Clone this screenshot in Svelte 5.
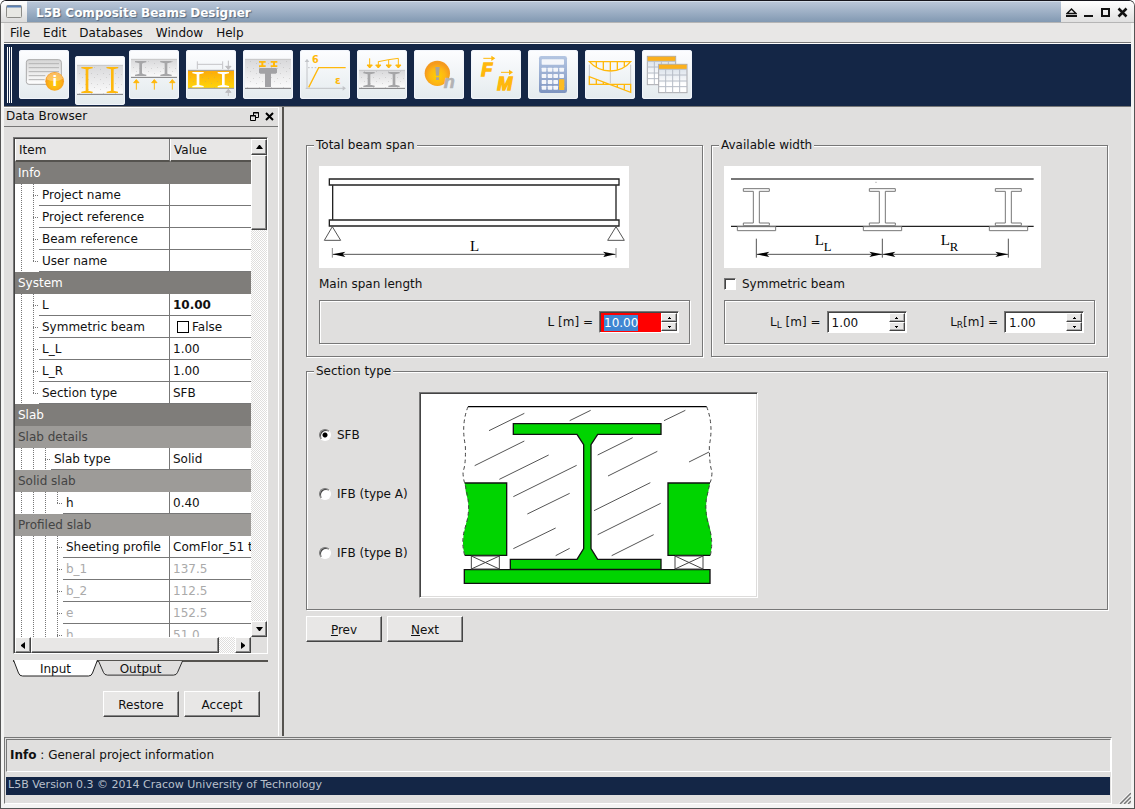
<script>
  import { onMount } from "svelte";

  let spanInput;
  let span = $state("10.00");
  let left = $state("1.00");
  let right = $state("1.00");
  let symmetric = $state(false);
  let section = $state("SFB");
  let tab = $state("Input");

  const menus = ["File", "Edit", "Databases", "Window", "Help"];
  const sections = ["SFB", "IFB (type A)", "IFB (type B)"];
  const tools = [
    "info",
    "span",
    "supports",
    "slab",
    "concrete",
    "material",
    "loads",
    "factors",
    "forces",
    "calculate",
    "diagrams",
    "tables",
  ];

  const rows = [
    { group: 1, name: "Info" },
    { name: "Project name", value: "", depth: 2 },
    { name: "Project reference", value: "", depth: 2 },
    { name: "Beam reference", value: "", depth: 2 },
    { name: "User name", value: "", depth: 2, last: true },
    { group: 1, name: "System" },
    { name: "L", value: "10.00", depth: 2, bold: true },
    { name: "Symmetric beam", value: "False", depth: 2, check: true },
    { name: "L_L", value: "1.00", depth: 2 },
    { name: "L_R", value: "1.00", depth: 2 },
    { name: "Section type", value: "SFB", depth: 2, last: true },
    { group: 1, name: "Slab" },
    { group: 2, name: "Slab details" },
    { name: "Slab type", value: "Solid", depth: 3 },
    { group: 2, name: "Solid slab" },
    { name: "h", value: "0.40", depth: 4, last: true },
    { group: 2, name: "Profiled slab" },
    { name: "Sheeting profile", value: "ComFlor_51 t", depth: 4 },
    { name: "b_1", value: "137.5", depth: 4, off: true },
    { name: "b_2", value: "112.5", depth: 4, off: true },
    { name: "e", value: "152.5", depth: 4, off: true },
    { name: "h", value: "51.0", depth: 4, off: true },
  ];

  // hatching of the concrete in the section drawing
  const hatch = [
    [583, 212, 689, 160],
    [825, 182, 888, 151],
    [1108, 182, 1172, 151],
    [540, 317, 689, 243],
    [614, 358, 762, 285],
    [656, 410, 846, 316],
    [698, 462, 825, 400],
    [656, 566, 783, 504],
    [783, 587, 825, 565],
    [909, 285, 1014, 233],
    [940, 348, 1088, 274],
    [898, 452, 1067, 368],
    [909, 524, 1098, 430],
    [951, 587, 1077, 524],
    [1183, 306, 1243, 276],
  ];

  function step(value, by) {
    return (parseFloat(value) + by).toFixed(2);
  }

  onMount(() => {
    spanInput.focus();
    spanInput.select();
  });
</script>

{#snippet ibeam(x, y, h, color)}
  <path
    fill={color}
    d="M{x} {y}h34v4l-13 3v{h - 14}l13 3v4h-34v-4l13 -3v-{h - 14}l-13 -3z"
  />
{/snippet}

{#snippet slab(y, h)}
  <rect x="6" {y} width="138" height={h} fill="url(#slabGrey)" />
  <rect x="6" {y} width="138" height={h} fill="url(#dots)" />
  <path d="M6 {y}h138" stroke="#c4c4c6" stroke-width="3" />
  <path d="M6 {y + h}h138" stroke="#77777a" stroke-width="3" />
{/snippet}

{#snippet arrow(x, y, len, dir, color)}
  <path
    d="M{x} {y}v{dir * len}m-8 {dir * -9}l8 {dir * 9}l8 {dir * -9}z"
    stroke={color}
    stroke-width="3"
    fill={color}
  />
{/snippet}

{#snippet toolIcon(name)}
  <svg class="tool-icon" viewBox="0 0 150 147" aria-hidden="true">
    {#if name === "info"}
      <rect x="22" y="29" width="105" height="74" rx="8" fill="url(#paper)" stroke="#aaa" stroke-width="3" />
      <path d="M29 41h91M29 53h91M29 65h91M29 77h50M29 89h48" stroke="#b4b4b4" stroke-width="3" />
      <circle cx="107" cy="94" r="28" fill="url(#amber)" />
      <path d="M82 88a26 26 0 0 1 50 -2q-24 14 -50 2z" fill="#ffd38a" opacity=".6" />
      <text x="107" y="108" class="glyph" font-size="40" fill="#fff" text-anchor="middle">i</text>
    {:else if name === "span"}
      {@render slab(28, 87)}
      {@render ibeam(19, 33, 78, "#ffb80c")}
      {@render ibeam(95, 33, 78, "#ffb80c")}
    {:else if name === "supports"}
      {@render slab(28, 54)}
      {@render ibeam(18, 33, 45, "#a6a6a8")}
      {@render ibeam(94, 33, 45, "#a6a6a8")}
      {@render arrow(22, 119, 30, -1, "#ffb80c")}
      {@render arrow(76, 119, 30, -1, "#ffb80c")}
      {@render arrow(130, 119, 30, -1, "#ffb80c")}
    {:else if name === "slab"}
      <rect x="6" y="61" width="138" height="54" fill="url(#slabAmber)" />
      <rect x="6" y="61" width="138" height="54" fill="url(#dots)" />
      <path d="M6 61h138M6 115h138" stroke="#9c9ca0" stroke-width="3" />
      {@render ibeam(19, 66, 46, "#fff")}
      {@render ibeam(95, 66, 46, "#fff")}
      <path d="M34 34v23M110 34v23M34 43h76" stroke="#c4c4c8" stroke-width="3" />
      {@render arrow(127, 32, 26, 1, "#bdbdc0")}
      {@render arrow(127, 138, 20, -1, "#bdbdc0")}
    {:else if name === "concrete"}
      {@render slab(28, 87)}
      <path d="M48 57q0 -3 4 -3h46q4 0 4 3v11l-4 3h-14v40h-18v-40h-14l-4 -3z" fill="#a2a2a5" />
      <path d="M48 33h20v5h-7v8h7v5h-20v-5h7v-8h-7zM83 33h20v5h-7v8h7v5h-20v-5h7v-8h-7z" fill="#ffb80c" />
    {:else if name === "material"}
      <path d="M21 115v-84M17 115h118" stroke="#c2c4c8" stroke-width="3" />
      <path d="M14 36l7 -10l7 10zM128 108l10 7l-10 7z" fill="#c2c4c8" />
      <path d="M24 53h32" stroke="#c2c4c8" stroke-width="3" stroke-dasharray="5 5" />
      <path d="M26 112l30 -59h81" fill="none" stroke="#ffb80c" stroke-width="4" />
      <text x="36" y="39" class="glyph" font-size="29" fill="#ffb80c">6</text>
      <text x="105" y="101" class="glyph" font-size="31" fill="#ffb80c">ε</text>
    {:else if name === "loads"}
      {@render slab(61, 54)}
      {@render ibeam(19, 66, 45, "#a6a6a8")}
      {@render ibeam(94, 66, 45, "#a6a6a8")}
      {@render arrow(38, 25, 29, 1, "#ffb80c")}
      {@render arrow(64, 34, 20, 1, "#ffb80c")}
      {@render arrow(95, 29, 25, 1, "#ffb80c")}
      {@render arrow(124, 25, 29, 1, "#ffb80c")}
      <path d="M64 35l31 -6l29 -4" fill="none" stroke="#ffb80c" stroke-width="3" />
    {:else if name === "factors"}
      <circle cx="70" cy="70" r="38" fill="url(#amber)" />
      <path d="M64 51h13l-2 26h-9zM66 82h9v8h-9z" fill="#aaa59c" />
      <text x="89" y="115" class="glyph slant" font-size="54" fill="#b2b2b4" stroke="#b2b2b4" stroke-width="2">n</text>
    {:else if name === "forces"}
      <text x="31" y="78" class="glyph slant" font-size="54" fill="#ffb80c" stroke="#ffb80c" stroke-width="4">F</text>
      <text x="79" y="121" class="glyph slant" font-size="54" fill="#ffb80c" stroke="#ffb80c" stroke-width="4">M</text>
      <path d="M37 25h30M90 67h30" stroke="#ffb80c" stroke-width="3" />
      <path d="M61 17l12 8l-12 8zM114 59l12 8l-12 8z" fill="#ffb80c" />
    {:else if name === "calculate"}
      <rect x="33" y="18" width="84" height="111" rx="7" fill="url(#calc)" />
      <rect x="41" y="28" width="67" height="16" rx="2" fill="#f4f6fa" />
      {#each [53, 72, 90, 107] as y}
        {#each [41, 59, 76, 94] as x}
          <rect {x} {y} width="14" height="12" rx="2" fill="#f4f6fa" />
        {/each}
      {/each}
      <rect x="93" y="88" width="16" height="32" rx="2" fill="#fdbb22" />
    {:else if name === "diagrams"}
      <path d="M13 44v62M76 66v34M137 44v60" stroke="#c4c6ca" stroke-width="3" />
      <path d="M13 35h124q-23 28 -61 28t-63 -28zM34 35v16M55 35v25M76 35v28M97 35v25M118 35v16" fill="none" stroke="#ffb80c" stroke-width="4" />
      <path d="M13 103h124v24l-124 -47zM34 88v15M55 96v7M97 103v8M118 103v16" fill="none" stroke="#ffb80c" stroke-width="4" />
    {:else}
      {#each [[16, 19], [50, 43]] as [x, y]}
        <rect {x} {y} width="85" height="85" fill="url(#sheet)" stroke="#a9a9ad" stroke-width="3" />
        <rect x={x + 1} y={y + 1} width="83" height="13" fill="#fbb01c" />
        <path
          d="M{x} {y + 15}h85M{x + 21} {y + 15}v70M{x + 42} {y + 15}v70M{x + 63} {y + 15}v70M{x} {y + 32}h85M{x} {y + 50}h85M{x} {y + 67}h85"
          stroke="#b6bcc6"
          stroke-width="3"
        />
      {/each}
    {/if}
  </svg>
{/snippet}

{#snippet tip(x, y, dir)}
  <path d="M{x} {y}l{dir * 38} -8l{dir * -8} 8l{dir * 8} 8z" />
{/snippet}

{#snippet steps(label, change)}
  <span class="steps">
    <button type="button" aria-label="Increase {label}" onclick={() => change(0.1)}>
      <svg viewBox="0 0 3 2"><path d="M1 0h1v1h1v1h-3v-1h1z" /></svg>
    </button>
    <button type="button" aria-label="Decrease {label}" onclick={() => change(-0.1)}>
      <svg viewBox="0 0 3 2"><path d="M0 0h3v1h-1v1h-1v-1h-1z" /></svg>
    </button>
  </span>
{/snippet}

<svg class="defs" aria-hidden="true">
  <defs>
    <linearGradient id="slabGrey" x2="0" y2="1">
      <stop offset="0" stop-color="#d8d8da" />
      <stop offset="1" stop-color="#fcfcfc" />
    </linearGradient>
    <linearGradient id="slabAmber" x2="0" y2="1">
      <stop offset="0" stop-color="#fda908" />
      <stop offset="1" stop-color="#ffd60a" />
    </linearGradient>
    <linearGradient id="paper" x2="0" y2="1">
      <stop offset="0" stop-color="#d6d6d6" />
      <stop offset="1" stop-color="#fff" />
    </linearGradient>
    <linearGradient id="calc" x2="0" y2="1">
      <stop offset="0" stop-color="#b4c6e2" />
      <stop offset="1" stop-color="#7e94c0" />
    </linearGradient>
    <linearGradient id="sheet" x2="0" y2="1">
      <stop offset="0" stop-color="#d2dbe6" />
      <stop offset=".7" stop-color="#fff" />
    </linearGradient>
    <radialGradient id="amber" cy=".6">
      <stop offset="0" stop-color="#ffd000" />
      <stop offset=".6" stop-color="#fdb714" />
      <stop offset="1" stop-color="#f59a1e" />
    </radialGradient>
    <pattern id="dots" width="36" height="30" patternUnits="userSpaceOnUse">
      <path d="M3 9h3v3h-3zM21 3h3v3h-3zM12 21h3v3h-3zM30 24h3v3h-3z" fill="#999" opacity=".3" />
    </pattern>
  </defs>
</svg>

<div class="window">
  <header class="titlebar">
    <div class="app-icon">
      <svg viewBox="0 0 16 13" width="16" height="13" aria-hidden="true">
        <rect x=".5" y=".5" width="15" height="12" rx="1" fill="#e8e8e4" stroke="#8c8c88" />
        <path d="M1 1.500h14" stroke="#5a80b4" stroke-width="2" />
      </svg>
    </div>
    <h1>L5B Composite Beams Designer</h1>
    <div class="window-buttons">
      <button aria-label="Shade">
        <svg viewBox="0 0 11 11"><path d="M1 6.500h9L5.500 2z" fill="none" stroke="#111" stroke-width="1.500" /><path d="M0 9h11" stroke="#111" stroke-width="2" /></svg>
      </button>
      <button aria-label="Minimize">
        <svg viewBox="0 0 11 11"><path d="M1 9h9" stroke="#111" stroke-width="2" /></svg>
      </button>
      <button aria-label="Maximize">
        <svg viewBox="0 0 11 11"><path d="M2 2h7v7h-7z" fill="none" stroke="#111" stroke-width="2" /></svg>
      </button>
      <button aria-label="Close">
        <svg viewBox="0 0 11 11"><path d="M1.500 1.500l8 8M9.500 1.500l-8 8" stroke="#111" stroke-width="2.500" /></svg>
      </button>
    </div>
  </header>

  <div class="client">
    <nav class="menubar">
      {#each menus as menu}
        <button>{menu}</button>
      {/each}
    </nav>

    <div class="toolbar">
      <span class="handle"></span>
      {#each tools as tool}
        <button class="tool" class:pressed={tool === "span"} aria-label={tool}>
          {@render toolIcon(tool)}
        </button>
      {/each}
    </div>

    <div class="workspace">
      <aside class="dock">
        <div class="dock-title">
          <h2>Data Browser</h2>
          <button aria-label="Float">
            <svg viewBox="0 0 9 9"><path d="M3.500 3v-2.500h5v5h-2.500M3 1h6M.5 3.500h5v5h-5zM0 4h6" fill="none" stroke="#000" /></svg>
          </button>
          <button aria-label="Close panel">
            <svg viewBox="0 0 9 9"><path d="M1 1l7 7M8 1l-7 7" fill="none" stroke="#000" stroke-width="2" /></svg>
          </button>
        </div>

        <div class="tree">
          <div class="viewport">
            <table>
              <thead>
                <tr><th class="item">Item</th><th>Value</th></tr>
              </thead>
              <tbody>
                {#each rows as row}
                  {#if row.group}
                    <tr class="group level{row.group}"><td colspan="2">{row.name}</td></tr>
                  {:else}
                    <tr class:off={row.off}>
                      <td class="item">
                        <div class="cell">
                          <svg class="guides" width={row.depth * 12} height="22" aria-hidden="true">
                            {#each Array(row.depth) as _, i}
                              {@const own = i === row.depth - 1}
                              <path d="M{i * 12 + 6.5} 0v{own && row.last ? 12 : 22}" />
                              {#if own}<path d="M{i * 12 + 6} 11.500h5" />{/if}
                            {/each}
                          </svg>
                          <span class="name">{row.name}</span>
                        </div>
                      </td>
                      <td class="value" class:bold={row.bold}>
                        {#if row.check}
                          <label><input type="checkbox" class="flat" />{row.value}</label>
                        {:else}
                          {row.value}
                        {/if}
                      </td>
                    </tr>
                  {/if}
                {/each}
              </tbody>
            </table>
          </div>
          <div class="scroll vertical">
            <button aria-label="Scroll up"><svg viewBox="0 0 7 4"><path d="M3 0h1l3 4h-7z" /></svg></button>
            <span class="track"><span class="thumb"></span></span>
            <button aria-label="Scroll down"><svg viewBox="0 0 7 4"><path d="M3 4h1l3 -4h-7z" /></svg></button>
          </div>
          <div class="scroll horizontal">
            <button aria-label="Scroll left"><svg class="side" viewBox="0 0 4 7"><path d="M0 3v1l4 3v-7z" /></svg></button>
            <span class="track"><span class="thumb"></span></span>
            <button aria-label="Scroll right"><svg class="side" viewBox="0 0 4 7"><path d="M4 3v1l-4 3v-7z" /></svg></button>
          </div>
        </div>

        <div class="tabs">
          {#each ["Input", "Output"] as name}
            <button class:active={tab === name} onclick={() => (tab = name)}>
              <svg viewBox="0 0 85 17" preserveAspectRatio="none" aria-hidden="true"><path d="M.5 0l5 13q1 3 4 3h66q3 0 4 -3l5 -13" /></svg>
              <span>{name}</span>
            </button>
          {/each}
        </div>

        <div class="dock-actions">
          <button class="push">Restore</button>
          <button class="push">Accept</button>
        </div>
      </aside>

      <main>
        <div class="columns">
          <fieldset>
            <legend>Total beam span</legend>
            <svg class="sketch" width="310" height="102" viewBox="72 108 930 306" role="img" aria-label="Beam span L">
              <rect x="72" y="108" width="930" height="306" fill="#fff" />
              <g fill="none" stroke="#222" stroke-width="3">
                <path d="M103 147h869v18h-869zM103 270h869v18h-869z" stroke-width="4" />
                <path d="M113 166v103M963 166v103" stroke-width="4" />
                <path d="M112 290l-24 41h49zM963 290l-25 41h50z" stroke="#555" />
                <path d="M112 373h850" stroke="#555" />
                <path d="M112 354v29M963 354v29" stroke="#888" />
              </g>
              {@render tip(113, 373, 1)}
              {@render tip(962, 373, -1)}
              <text x="525" y="363" class="serif" font-size="45">L</text>
            </svg>
            <p>Main span length</p>
            <div class="inputs">
              <div class="field">
                <label for="span">L [m] =</label>
                <span class="spin">
                  <input id="span" class="invalid" type="text" bind:this={spanInput} bind:value={span} />
                  {@render steps("L", (by) => (span = step(span, by)))}
                </span>
              </div>
            </div>
          </fieldset>

          <fieldset>
            <legend>Available width</legend>
            <svg class="sketch" width="317" height="102" viewBox="72 108 951 306" role="img" aria-label="Widths to the left and right">
              <rect x="72" y="108" width="951" height="306" fill="#fff" />
              <path d="M93 147h908" stroke="#777" stroke-width="6" />
              <path d="M93 289h908" stroke="#222" stroke-width="4" />
              <path d="M525 157h6" stroke="#aaa" stroke-width="2" />
              {#each [169, 547, 925] as x}
                <path
                  d="M{x - 39} 176h78v8h-30v95h30v8h-78v-8h30v-95h-30z"
                  fill="#fff"
                  stroke="#777"
                  stroke-width="3"
                />
                <path d="M{x - 57} 290h115v12h-115z" fill="#fff" stroke="#777" stroke-width="3" />
                <path d="M{x} 326v57" stroke="#555" stroke-width="3" />
              {/each}
              <path d="M169 373h756" stroke="#555" stroke-width="3" />
              {@render tip(170, 373, 1)}
              {@render tip(546, 373, -1)}
              {@render tip(548, 373, 1)}
              {@render tip(924, 373, -1)}
              <text x="344" y="345" class="serif" font-size="45">L<tspan font-size="38" dy="18">L</tspan></text>
              <text x="722" y="345" class="serif" font-size="45">L<tspan font-size="38" dy="18">R</tspan></text>
            </svg>
            <p>
              <label class="option"><input type="checkbox" class="sunken" bind:checked={symmetric} />Symmetric beam</label>
            </p>
            <div class="inputs">
              <div class="field">
                <label for="left">L<sub>L</sub> [m] =</label>
                <span class="spin">
                  <input id="left" type="text" bind:value={left} />
                  {@render steps("L left", (by) => (left = step(left, by)))}
                </span>
              </div>
              <div class="field">
                <label for="right">L<sub>R</sub>[m] =</label>
                <span class="spin">
                  <input id="right" type="text" bind:value={right} />
                  {@render steps("L right", (by) => (right = step(right, by)))}
                </span>
              </div>
            </div>
          </fieldset>
        </div>

        <fieldset class="section">
          <legend>Section type</legend>
          <div class="section-body">
            <div class="radios">
              {#each sections as name}
                <label class="option"><input type="radio" name="section" value={name} bind:group={section} />{name}</label>
              {/each}
            </div>
            <div class="preview">
              <svg width="335" height="202" viewBox="379 102 1005 606" role="img" aria-label="SFB cross section">
                <path d="M520 140h716" stroke="#000" stroke-width="4" />
                <g stroke="#555" stroke-width="3">
                  {#each hatch as [x1, y1, x2, y2]}
                    <line {x1} {y1} {x2} {y2} />
                  {/each}
                </g>
                <g fill="#00d400">
                  <path d="M510 369h126v217h-126q-12 -42 4 -94q16 -50 0 -92z" />
                  <path d="M1246 369h-126v217h127q10 -46 -4 -94q-16 -50 -3 -92z" />
                </g>
                <g fill="none" stroke="#111" stroke-width="4">
                  <path d="M510 369h126v217h-126M1246 369h-126v217h127" />
                  <path
                    d="M520 140q-21 54 -8 116q2 60 -7 78q0 20 5 35q6 24 10 50q6 38 -8 82q-14 42 -2 85"
                    stroke="#444"
                    stroke-width="3"
                    stroke-dasharray="11 9"
                  />
                  <path
                    d="M1236 140q21 54 8 116q0 60 8 78q0 20 -6 35q-6 24 -11 50q-5 38 8 82q14 42 4 85"
                    stroke="#444"
                    stroke-width="3"
                    stroke-dasharray="11 9"
                  />
                </g>
                <path
                  d="M656 191h443v32h-190l-20 31v312l20 32h190v30h-452v-30h200l20 -32v-312l-20 -31h-191z"
                  fill="#00d400"
                  stroke="#111"
                  stroke-width="4"
                />
                <path d="M509 629h737v41h-737z" fill="#00d400" stroke="#111" stroke-width="4" />
                <g fill="none" stroke="#444" stroke-width="3">
                  <path d="M530 588h84v39h-84zl84 39M614 588l-84 39" />
                  <path d="M1141 588h84v39h-84zl84 39M1225 588l-84 39" />
                </g>
              </svg>
            </div>
          </div>
        </fieldset>

        <div class="pager">
          <button class="push"><u>P</u>rev</button>
          <button class="push"><u>N</u>ext</button>
        </div>
      </main>
    </div>

    <footer>
      <div class="bottom">
        <div class="message"><b>Info</b>&nbsp;: General project information</div>
        <div class="version">L5B Version 0.3 © 2014 Cracow University of Technology</div>
      </div>
      <svg class="grip" width="14" height="14" viewBox="0 0 14 14" aria-hidden="true">
        <path d="M2 14l12 -12M6 14l8 -8M10 14l4 -4" stroke="#fff" stroke-width="1.500" />
        <path d="M3 14l11 -11M7 14l7 -7M11 14l3 -3" stroke="#777" stroke-width="1.500" />
      </svg>
    </footer>
  </div>
</div>

<style>
  :global(body) {
    background: #fff;
  }

  .window,
  .window * {
    box-sizing: border-box;
  }

  .window {
    display: flex;
    flex-direction: column;
    height: 100vh;
    overflow: hidden;
    border: 1px solid #555;
    border-top-color: #15151c;
    border-radius: 6px 6px 0 0;
    background: #f4f4f3;
    color: #111;
    font: 12px/16px "DejaVu Sans", sans-serif;
  }

  button,
  input {
    font: inherit;
    color: inherit;
  }

  button {
    padding: 0;
    border: 0;
    background: none;
  }

  h1,
  h2,
  p {
    margin: 0;
    font-size: 12px;
  }

  .defs {
    position: absolute;
    width: 0;
    height: 0;
  }

  /* title bar */

  .titlebar {
    display: flex;
    flex: none;
    height: 22px;
    border-bottom: 1px solid #b5b5b5;
  }

  .app-icon {
    display: flex;
    align-items: center;
    justify-content: center;
    width: 26px;
    background: linear-gradient(#fff, #dcdcdc);
  }

  .titlebar h1 {
    flex: 1;
    padding-left: 9px;
    background: linear-gradient(#b9c6d8, #8299b2);
    border-top: 1px solid #d3dde9;
    color: #fff;
    line-height: 22px;
    text-shadow: 1px 1px 1px #55677c;
  }

  .window-buttons {
    display: flex;
    align-items: center;
    gap: 6px;
    padding: 2px 6px 0 5px;
    background: linear-gradient(#fff, #e0e0e0);
  }

  .window-buttons button,
  .window-buttons svg {
    display: block;
    width: 11px;
    height: 11px;
  }

  /* menu and tool bars */

  .client {
    display: flex;
    flex: 1;
    flex-direction: column;
    min-height: 0;
    margin: 0 3px 4px;
    background: #e0dfde;
  }

  .menubar {
    display: flex;
    flex: none;
    gap: 13px;
    height: 21px;
    padding: 0 6px;
    border-bottom: 1px solid #fff;
    box-shadow: inset 0 -1px #777;
    background: #e8e7e6;
  }

  .menubar button {
    line-height: 20px;
  }

  .toolbar {
    display: flex;
    flex: none;
    gap: 7px;
    height: 63px;
    padding: 6px 3px;
    border-bottom: 1px solid #777;
    background: #142646;
  }

  .handle {
    width: 5px;
    height: 56px;
    margin-top: -3px;
    border: solid #fff;
    border-width: 0 1px;
    background: linear-gradient(90deg, #142646 1px, #fff 1px 2px, #142646 2px);
  }

  .tool {
    width: 50px;
    height: 49px;
    border-radius: 3px;
    background: linear-gradient(#fdfdff, #e4ebee);
    box-shadow: inset 0 0 0 1px #f2f5fb;
  }

  .tool.pressed {
    margin: 6px -3px 0 -1px;
  }

  .tool-icon {
    display: block;
    width: 50px;
    height: 49px;
  }

  .glyph {
    font-family: "DejaVu Sans", sans-serif;
    font-weight: bold;
  }

  .slant {
    font-style: italic;
    font-family: "Liberation Sans", sans-serif;
  }

  .serif {
    font-family: "Liberation Serif", serif;
  }

  /* data browser */

  .workspace {
    display: flex;
    flex: 1;
    min-height: 0;
  }

  .dock {
    display: flex;
    flex: none;
    flex-direction: column;
    width: 280px;
    padding-bottom: 19px;
    border-right: 2px solid #55534f;
    box-shadow: inset -3px 0 #e0dfde, inset -4px 0 #fff;
  }

  .dock-title {
    display: flex;
    align-items: center;
    gap: 6px;
    height: 20px;
    margin-right: 4px;
    padding: 0 4px 2px 2px;
    border-bottom: 1px solid #777;
    border-top: 1px solid #fff;
  }

  .dock-title h2 {
    flex: 1;
    font-weight: normal;
  }

  .dock-title button,
  .dock-title svg {
    display: block;
    width: 9px;
    height: 9px;
  }

  .tree {
    display: grid;
    flex: 1;
    grid-template: minmax(0, 1fr) 16px / minmax(0, 1fr) 16px;
    min-height: 0;
    margin: 10px 14px 0 9px;
    border: 1px solid #777;
    border-right-color: #fff;
    border-bottom-color: #fff;
    box-shadow: inset 1px 1px #444;
    padding: 1px 0 0 1px;
  }

  .viewport {
    overflow: hidden;
    background: #fff;
  }

  table {
    width: 300px;
    border-collapse: separate;
    border-spacing: 0;
    table-layout: fixed;
  }

  th,
  td {
    height: 22px;
    padding: 0 3px;
    line-height: 20px;
    text-align: left;
    white-space: nowrap;
    font-weight: normal;
  }

  th {
    height: 23px;
    border-bottom: 2px solid #55534f;
    border-left: 1px solid #fff;
    background: #e8e7e6;
  }

  .item {
    width: 155px;
    border-right: 1px solid #777;
  }

  .group td {
    color: #fff;
    background: #7f7d7a;
  }

  .group.level2 td {
    color: #444;
    background: #9d9b98;
  }

  td.item {
    padding: 0;
  }

  .cell {
    display: flex;
  }

  .guides {
    flex: none;
    fill: none;
    stroke: #777;
    stroke-dasharray: 1 1;
  }

  .name {
    flex: 1;
    height: 22px;
    padding-left: 3px;
    line-height: 22px;
  }

  .name,
  .value {
    border-bottom: 1px solid #777;
  }

  .value label {
    display: flex;
    align-items: center;
    gap: 3px;
    padding-left: 4px;
  }

  .off {
    color: #aaa;
  }

  .bold {
    font-weight: bold;
  }

  .flat {
    appearance: none;
    width: 12px;
    height: 12px;
    margin: 0;
    border: 1px solid #000;
    background: #fff;
  }

  .scroll {
    display: flex;
    background: repeating-conic-gradient(#fff 0 25%, #dfdedd 0 50%) 0 0 / 2px 2px;
  }

  .vertical {
    flex-direction: column;
  }

  .track {
    display: flex;
    flex: 1;
    flex-direction: inherit;
  }

  .scroll button,
  .thumb,
  .push {
    border: 1px solid #fff;
    border-right-color: #444;
    border-bottom-color: #444;
    background: #e8e7e6;
    box-shadow: inset -1px -1px #888;
  }

  .scroll button {
    display: flex;
    align-items: center;
    justify-content: center;
    width: 16px;
    height: 16px;
  }

  .scroll svg {
    width: 7px;
    height: 4px;
  }

  .scroll svg.side {
    width: 4px;
    height: 7px;
  }

  .vertical .thumb {
    width: 16px;
    height: 16%;
  }

  .horizontal .thumb {
    width: 92%;
    height: 16px;
  }

  .tabs {
    display: flex;
    margin: 6px 14px 0 9px;
    border-top: 2px solid #55534f;
    height: 17px;
  }

  .tabs button {
    position: relative;
    width: 85px;
    height: 14px;
  }

  .tabs svg {
    position: absolute;
    inset: -1px 0 0;
    width: 85px;
    height: 15px;
    fill: #e0dfde;
    stroke: #222;
  }

  .tabs span {
    position: relative;
    display: block;
    line-height: 12px;
  }

  .tabs .active,
  .tabs .active svg {
    height: 17px;
  }

  .tabs .active svg {
    inset: -2px 0 0;
    fill: #fff;
  }

  .tabs .active {
    margin-bottom: -2px;
    padding-bottom: 4px;
  }

  .dock-actions,
  .pager {
    display: flex;
    gap: 5px;
  }

  .dock-actions {
    justify-content: flex-end;
    margin: 14px 22px 0;
  }

  .push {
    width: 76px;
    height: 26px;
    padding-top: 1px;
  }

  /* form */

  main {
    flex: 1;
    padding: 30px 23px 0 22px;
  }

  .columns {
    display: grid;
    grid-template-columns: 1fr 1fr;
    gap: 8px;
  }

  fieldset {
    min-width: 0;
    margin: 0;
    padding: 13px 12px 12px;
    border: 1px solid #777;
    box-shadow: 1px 1px #fff, inset 1px 1px #fff;
  }

  legend {
    margin-left: -5px;
    padding: 0 2px;
    background: #e0dfde;
  }

  .sketch {
    display: block;
  }

  p {
    margin: 8px 0;
  }

  .inputs {
    display: flex;
    gap: 6px;
    padding: 10px;
    border: 1px solid #777;
    box-shadow: 1px 1px #fff, inset 1px 1px #fff;
  }

  .field {
    display: flex;
    flex: 1;
    align-items: center;
    justify-content: flex-end;
    gap: 6px;
  }

  sub {
    font-size: 9px;
    line-height: 0;
    vertical-align: -2px;
  }

  .spin {
    display: flex;
    width: 80px;
    height: 22px;
    border: 1px solid #777;
    border-right-color: #fff;
    border-bottom-color: #fff;
    background: #fff;
    box-shadow: inset 1px 1px #444;
  }

  .spin input {
    flex: 1;
    width: 0;
    margin: 1px 0 0 1px;
    padding: 0 3px;
    border: 0;
    outline: 0;
    background: #fff;
  }

  .spin .invalid {
    background: #f00;
  }

  .spin input::selection {
    color: #fff;
    background: #3f86d2;
  }

  .steps {
    display: flex;
    flex-direction: column;
    width: 17px;
    padding: 1px 1px 1px 0;
  }

  .steps button {
    display: flex;
    flex: 1;
    align-items: center;
    justify-content: center;
    border: 1px solid #fff;
    border-right-color: #444;
    border-bottom-color: #444;
    background: #e8e7e6;
    box-shadow: inset -1px -1px #aaa;
  }

  .steps svg {
    width: 3px;
    height: 2px;
  }

  .option {
    display: flex;
    align-items: center;
    gap: 6px;
  }

  .sunken,
  .option input[type="radio"] {
    appearance: none;
    width: 12px;
    height: 12px;
    margin: 0;
    border: 1px solid #777;
    border-right-color: #fff;
    border-bottom-color: #fff;
    background: #fff;
    box-shadow: inset 1px 1px #444;
  }

  .option input[type="radio"] {
    border-radius: 50%;
  }

  .option input[type="radio"]:checked {
    background: radial-gradient(circle, #000 2px, #fff 3px);
  }

  .section {
    margin-top: 6px;
    padding-bottom: 11px;
  }

  .section-body {
    display: flex;
  }

  .radios {
    display: flex;
    flex-direction: column;
    justify-content: center;
    gap: 43px;
    width: 100px;
    padding-bottom: 2px;
  }

  .preview {
    padding: 1px;
    border: 1px solid #777;
    border-right-color: #fff;
    border-bottom-color: #fff;
    background: #fff;
    box-shadow: inset 1px 1px #444, inset -1px -1px #dddcdb;
  }

  .preview svg {
    display: block;
  }

  .pager {
    margin-top: 6px;
  }

  /* status area */

  footer {
    display: flex;
    flex: none;
    align-items: flex-end;
    justify-content: space-between;
    padding-top: 1px;
  }

  .bottom {
    flex: 1;
    margin-right: 5px;
    padding: 1px 0 8px 1px;
    border: 1px solid #777;
    border-right-color: #fff;
    border-bottom-color: #fff;
  }

  .message {
    height: 33px;
    margin-bottom: 5px;
    padding-left: 3px;
    border: 1px solid #777;
    border-right-color: #fff;
    border-bottom-color: #fff;
    line-height: 31px;
  }

  .version {
    height: 18px;
    margin-right: 1px;
    padding-left: 2px;
    background: #142646;
    color: #b9c0cc;
    font-size: 11px;
    line-height: 15px;
  }
</style>
